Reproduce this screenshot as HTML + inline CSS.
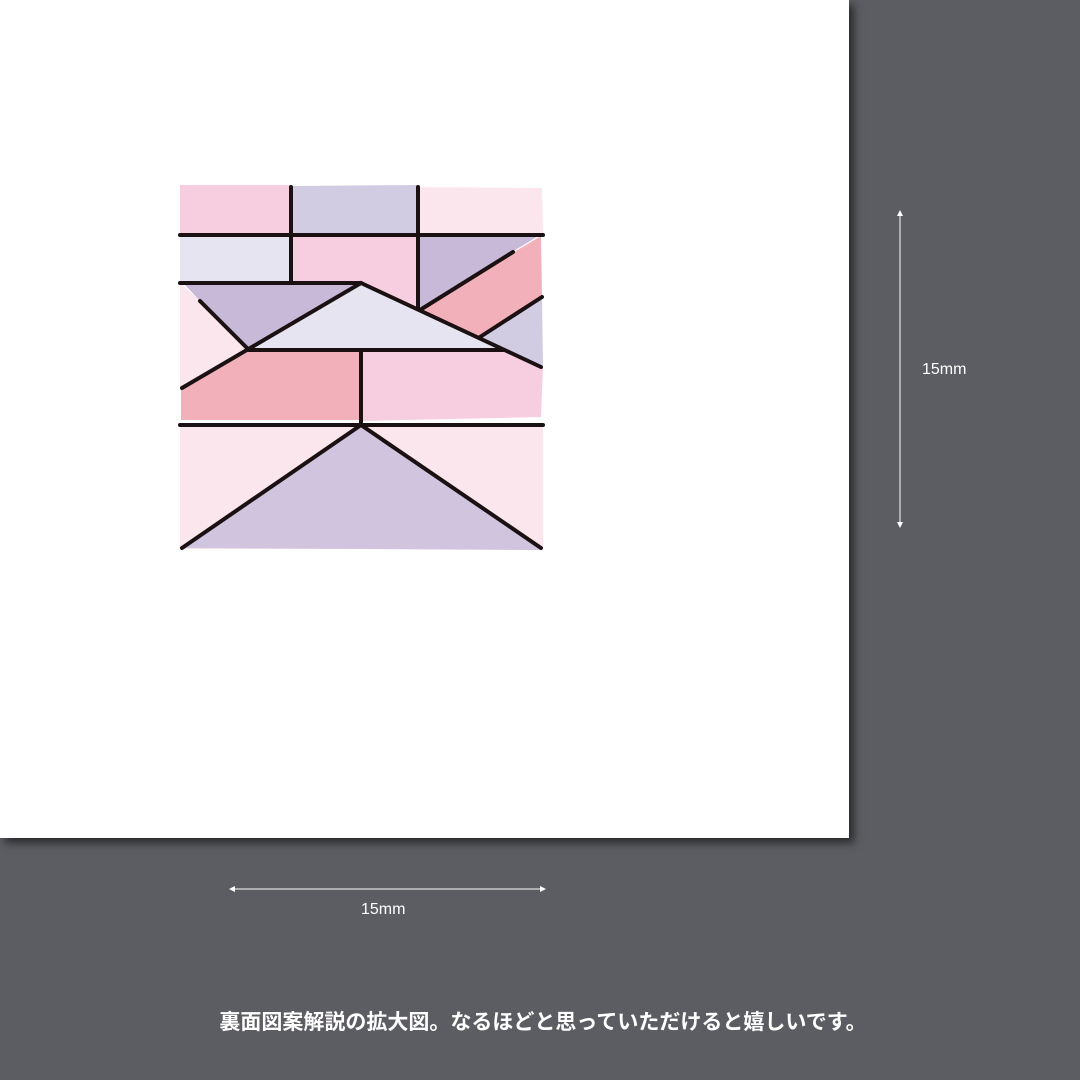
<!DOCTYPE html>
<html><head><meta charset="utf-8"><style>
html,body{margin:0;padding:0;width:1080px;height:1080px;overflow:hidden;background:#5c5d62;}
#panel{position:absolute;left:0;top:0;width:849px;height:838px;background:#fff;box-shadow:5px 5px 8px rgba(0,0,0,0.55);}
svg{position:absolute;left:0;top:0;}
.t{position:absolute;color:#fff;font-family:"Liberation Sans",sans-serif;font-size:16px;}
#cap{position:absolute;left:0;width:1080px;top:1006px;text-align:center;padding-left:3px;color:#fff;font-weight:bold;font-size:21px;font-family:"Liberation Sans","Noto Sans CJK JP",sans-serif;white-space:nowrap;}
</style></head><body>
<div id="panel"></div>
<svg width="1080" height="1080" viewBox="0 0 1080 1080">
<g stroke="none">
<rect x="180" y="185" width="111" height="50" fill="#f7cde0"/>
<polygon points="291,186 418,185 418,235 291,235" fill="#d2cce3"/>
<polygon points="418,187 542,188 543,235 418,235" fill="#fce6ee"/>
<rect x="180" y="235" width="111" height="48" fill="#e6e4f1"/>
<polygon points="291,235 418,235 418,309 361,283 291,283" fill="#f7cde0"/>
<polygon points="418,235 540,235 418,309" fill="#c7b9d7"/>
<polygon points="418,309 541,236 542,297 480,337" fill="#f2b1ba"/>
<polygon points="480,337 542,297 543,367" fill="#d2cce3"/>
<polygon points="180,283 200,301 248,350 180,390" fill="#fce6ee"/>
<polygon points="185,285 355,285 248,350 200,301" fill="#c7b9d7"/>
<polygon points="361,283 248,350 503,350" fill="#e6e4f1"/>
<polygon points="248,350 361,350 361,420 181,420 181,388" fill="#f2b1ba"/>
<polygon points="361,350 503,350 543,367 541,417 361,421" fill="#f7cde0"/>
<rect x="180" y="425" width="363" height="124" fill="#fce6ee"/>
<polygon points="361,425 182,548 541,550" fill="#d1c4df"/>
</g>
<g stroke="#1b1012" stroke-width="4" stroke-linecap="round" fill="none">
<line x1="180" y1="235" x2="543" y2="235"/>
<line x1="291" y1="187" x2="291" y2="283"/>
<line x1="418" y1="187" x2="418" y2="309"/>
<line x1="180" y1="283" x2="361" y2="283"/>
<polyline points="182,388 361,283 541,367"/>
<line x1="248" y1="350" x2="503" y2="350"/>
<line x1="200" y1="301" x2="248" y2="349"/>
<line x1="420" y1="310" x2="513" y2="252"/>
<line x1="480" y1="337" x2="542" y2="297"/>
<line x1="361" y1="350" x2="361" y2="425"/>
<line x1="180" y1="425" x2="543" y2="425"/>
<polyline points="182,548 361,425 541,548"/>
</g>
<g stroke="#fff" stroke-width="1" fill="#fff">
<line x1="232" y1="889" x2="543" y2="889"/>
<polygon points="229,889 235,886 235,892" stroke="none"/>
<polygon points="546,889 540,886 540,892" stroke="none"/>
<line x1="900" y1="214" x2="900" y2="524"/>
<polygon points="900,210 897,216 903,216" stroke="none"/>
<polygon points="900,528 897,522 903,522" stroke="none"/>
</g>
</svg>
<div class="t" style="left:361px;top:901px;">15mm</div>
<div class="t" style="left:922px;top:361px;">15mm</div>
<div id="cap">裏面図案解説の拡大図。なるほどと思っていただけると嬉しいです。</div>
</body></html>
